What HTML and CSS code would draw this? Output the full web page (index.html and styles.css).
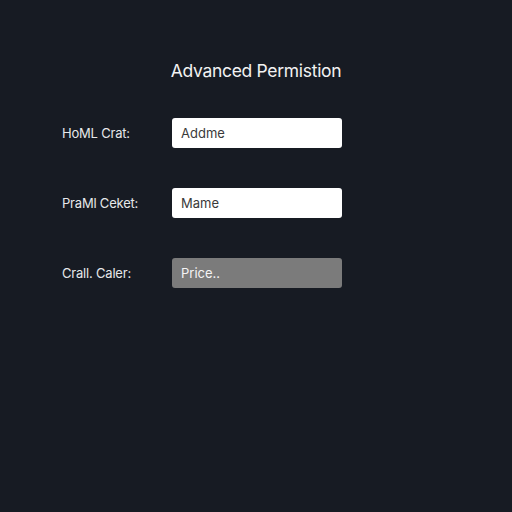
FILE: index.html
```html
<!DOCTYPE html>
<html>
<head>
<meta charset="utf-8">
<link rel="stylesheet" href="styles.css">
</head>
<body>
<main class="panel">
  <h1 class="title">Advanced Permistion</h1>
  <form class="form">
    <label class="label">HoML Crat:</label>
    <div class="field field-light">Addme</div>
    <label class="label">PraMl Ceket:</label>
    <div class="field field-light">Mame</div>
    <label class="label">Crall. Caler:</label>
    <div class="field field-gray">Price..</div>
  </form>
</main>
</body>
</html>
```
FILE: styles.css
```css
html, body {
  margin: 0;
  padding: 0;
  width: 512px;
  height: 512px;
  background: #171b23;
  font-family: Inter, "Noto Sans", sans-serif;
  color: #eceef0;
}
.panel {
  display: flex;
  flex-direction: column;
  align-items: center;
  padding-top: 60px;
}
.title {
  margin: 0;
  font-size: 17.5px;
  font-weight: 400;
  letter-spacing: -0.3px;
  color: #f2f2f2;
  line-height: 22px;
}
.form {
  align-self: flex-start;
  display: grid;
  grid-template-columns: 110px 170px;
  row-gap: 40px;
  align-items: center;
  margin-top: 36px;
  margin-left: 62px;
}
.label {
  font-size: 13px;
  color: #e6e8ea;
  letter-spacing: -0.2px;
}
.field {
  height: 30px;
  border-radius: 3px;
  display: flex;
  align-items: center;
  padding-left: 9px;
  font-size: 13px;
  box-sizing: border-box;
}
.field-light {
  background: #ffffff;
  color: #3a3a3a;
}
.field-gray {
  background: #7b7b7b;
  color: #f4f4f4;
}
```
